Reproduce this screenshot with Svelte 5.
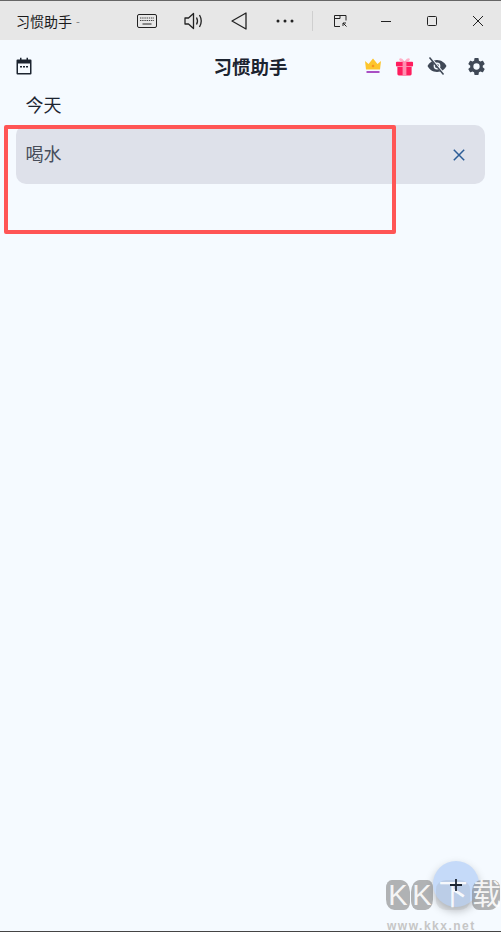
<script lang="ts">
  let habits = $state(["喝水"]);
</script>

<div class="window">
  <header class="titlebar">
    <span class="app-name">习惯助手</span>
    <span class="dash">-</span>
    <div class="tools">
      <svg class="tool kb" viewBox="0 0 20 14" width="20" height="14" fill="none" stroke="#222" stroke-width="1">
        <rect x="0.5" y="0.5" width="19" height="13" rx="1.5" />
        <path d="M3 4h14M3 6.5h14" stroke-dasharray="1.4 0.8" stroke="#444" />
        <path d="M5.5 10h9" />
      </svg>
      <svg class="tool vol" viewBox="0 0 20 18" width="20" height="18" fill="none" stroke="#222" stroke-width="1.3">
        <path d="M1 6h3.500L9.500 1.500v15L4.500 12H1z" stroke-linejoin="round" />
        <path d="M12.500 5.500q2 3.500 0 7M15.500 3q3.500 6 0 12" />
      </svg>
      <svg class="tool back" viewBox="0 0 16 18" width="16" height="18" fill="none" stroke="#222" stroke-width="1.3">
        <path d="M15 1v16L1 9z" stroke-linejoin="round" />
      </svg>
      <svg class="tool more" viewBox="0 0 18 4" width="18" height="4" fill="#222">
        <circle cx="2" cy="2" r="1.500" /><circle cx="9" cy="2" r="1.500" /><circle cx="16" cy="2" r="1.500" />
      </svg>
      <i class="sep"></i>
      <svg class="tool pop" viewBox="0 0 13 12" width="13" height="12" fill="none" stroke="#222" stroke-width="1">
        <path d="M6 11.500H.5V.5h11.500v5M.5 3.500h5.500V.5M12.500 11.500l-3.500-3.500M9 11V8h3" />
      </svg>
    </div>
    <div class="win-btns">
      <svg viewBox="0 0 10 10" width="10" height="10" stroke="#222" fill="none"><path d="M0 5.500h10" /></svg>
      <svg viewBox="0 0 10 10" width="10" height="10" stroke="#222" fill="none"><rect x="0.500" y="0.500" width="9" height="9" rx="1" /></svg>
      <svg viewBox="0 0 10 10" width="10" height="10" stroke="#222" fill="none"><path d="M0 0l10 10M10 0L0 10" /></svg>
    </div>
  </header>

  <main class="app">
    <div class="appbar">
      <svg class="cal" viewBox="0 0 16 18" width="16" height="18">
        <path d="M1.500 2.500h2.500V.8h1.500v1.700h5V.8h1.500v1.700h2.500a1 1 0 0 1 1 1v13a1 1 0 0 1-1 1h-13a1 1 0 0 1-1-1v-13a1 1 0 0 1 1-1z" fill="#1c2430" />
        <rect x="2" y="6.500" width="12" height="9.500" fill="#f5faff" />
        <path d="M4 9h2v1.500H4zM7 9h2v1.500H7zM10 9h2v1.500h-2z" fill="#1c2430" />
      </svg>
      <h1>习惯助手</h1>
      <div class="actions">
        <svg viewBox="0 0 18 16" width="18" height="16">
          <path d="M1 3l3.500 3L9 0.500 13.500 6 17 3l-1 8.500H2z" fill="#fdc52c" />
          <circle cx="9" cy="8" r="1.300" fill="#f7931e" />
          <rect x="2.500" y="13" width="13" height="2" fill="#a94fc4" />
        </svg>
        <svg viewBox="0 0 20 20" width="19" height="19">
          <path d="M10 5C8 1 5 0.500 4.500 2S6 5 10 5c4 0 6-1.500 5.500-3S12 1 10 5z" fill="#ffb0c8" />
          <rect x="1" y="5" width="18" height="5" rx="1" fill="#ff1d5e" />
          <path d="M2.500 10.500h15V18a1.500 1.500 0 0 1-1.500 1.500H4A1.500 1.500 0 0 1 2.500 18z" fill="#ff1d5e" />
          <rect x="8" y="5" width="4" height="14.500" fill="#ff8fb0" />
        </svg>
        <svg viewBox="0 0 20 18" width="20" height="18">
          <path d="M10 3C5.500 3 2 6 .5 9 2 12 5.500 15 10 15s8-3 9.500-6C18 6 14.500 3 10 3z" fill="#3f4856" />
          <circle cx="10" cy="9" r="3.400" fill="#f5faff" />
          <circle cx="10" cy="9" r="2" fill="#3f4856" />
          <path d="M3.300 0.500l14 17" stroke="#f5faff" stroke-width="2.200" />
          <path d="M2.500 0.500l14 17" stroke="#3f4856" stroke-width="1.500" />
        </svg>
        <svg class="gear" viewBox="0 0 24 24" width="21" height="21">
          <path fill="#3f4856" d="M19.140 12.940c.04-.3.060-.61.060-.94s-.02-.64-.07-.94l2.030-1.580a.49.49 0 0 0 .12-.61l-1.920-3.320a.49.49 0 0 0-.59-.22l-2.390.96a7.030 7.030 0 0 0-1.620-.94l-.36-2.540a.48.48 0 0 0-.48-.41h-3.840a.48.48 0 0 0-.47.41l-.36 2.540c-.59.24-1.130.57-1.620.94l-2.390-.96a.49.49 0 0 0-.59.22L2.740 8.870a.48.48 0 0 0 .12.61l2.030 1.580c-.05.3-.09.63-.09.94s.02.64.07.94l-2.030 1.580a.49.49 0 0 0-.12.61l1.920 3.320c.12.22.37.29.59.22l2.390-.96c.5.380 1.030.7 1.620.94l.36 2.540c.05.24.24.41.48.41h3.840c.24 0 .44-.17.47-.41l.36-2.540c.59-.24 1.130-.56 1.620-.94l2.390.96c.22.08.47 0 .59-.22l1.920-3.320a.48.48 0 0 0-.12-.61l-2.010-1.580zM12 15.600a3.600 3.600 0 1 1 0-7.200 3.600 3.600 0 0 1 0 7.200z" />
        </svg>
      </div>
    </div>

    <h2 class="section">今天</h2>

    {#each habits as habit}
      <div class="habit">
        <span>{habit}</span>
        <svg viewBox="0 0 12 12" width="12" height="12" stroke="#2b5c96" stroke-width="1.500" fill="none"><path d="M.8.800l10.400 10.400M11.200.800L.8 11.200" /></svg>
      </div>
    {/each}
  </main>

  <!-- annotation + watermark lie over the page -->
  <div class="highlight"></div>
  <div class="fab"></div>
  <div class="watermark">
    <div class="mark">
      <span class="k1">K</span><span class="k2">K</span><span class="xia">下</span><span class="zai">载</span>
    </div>
    <div class="url">www.kkx.net</div>
  </div>
  <svg class="plus" viewBox="0 0 12 12" width="12" height="12" stroke="#1d2633" stroke-width="1.800"><path d="M6 0v12M0 6h12" /></svg>
</div>

<style>
  :global(body) {
    margin: 0;
    background: #f5faff;
  }

  .window {
    position: relative;
    width: 501px;
    height: 932px;
    box-sizing: border-box;
    display: flex;
    flex-direction: column;
    overflow: hidden;
    border-top: 1px solid #666;
    border-bottom: 1px solid #444;
    font-family: "Noto Sans CJK SC", "Noto Sans", sans-serif;
    background: #f5faff;
  }

  .titlebar {
    height: 39px;
    flex: none;
    display: flex;
    align-items: center;
    background: #e7e7e7;
    padding-left: 16px;
    color: #1a1a1a;
  }

  .app-name {
    font-size: 14px;
    width: 60px;
    white-space: nowrap;
  }

  .dash {
    font-size: 11px;
    color: #777;
  }

  .tools {
    display: flex;
    align-items: center;
    margin-left: 57px;
  }

  .vol { margin-left: 27px; }
  .back { margin-left: 27px; }
  .more { margin-left: 29px; }
  .pop { margin-left: 21px; }

  .sep {
    width: 1px;
    height: 20px;
    background: #cfcfcf;
    margin-left: 18px;
  }

  .win-btns {
    margin-left: auto;
    margin-right: 18px;
    display: flex;
    gap: 36px;
  }

  .app {
    flex: 1;
    display: flex;
    flex-direction: column;
    padding: 0 16px;
  }

  .appbar {
    position: relative;
    height: 52px;
    display: flex;
    align-items: center;
    justify-content: center;
  }

  .cal {
    position: absolute;
    left: 0;
    top: 17px;
  }

  h1 {
    margin: 0;
    font-size: 18.500px;
    font-weight: 700;
    color: #1c2430;
    line-height: 1;
  }

  .actions {
    position: absolute;
    right: -2px;
    top: 0;
    height: 52px;
    display: flex;
    align-items: center;
    gap: 13px;
  }

  .gear { margin-left: 6px; }

  .section {
    margin: 0 0 0 9.500px;
    height: 33px;
    font-size: 18px;
    font-weight: 400;
    line-height: 24px;
    color: #1c2430;
  }

  .habit {
    height: 59px;
    box-sizing: border-box;
    padding: 0 20px 0 9.500px;
    display: flex;
    align-items: center;
    justify-content: space-between;
    background: #dee1ea;
    border-radius: 10px;
    font-size: 18px;
    color: #474d5a;
  }

  .habit span {
    margin-bottom: 4px;
  }

  .highlight {
    position: absolute;
    left: 4px;
    top: 124px;
    width: 392px;
    height: 109px;
    box-sizing: border-box;
    border: 4px solid #ff5555;
    border-radius: 2px;
  }

  .fab {
    position: absolute;
    left: 433px;
    top: 860px;
    width: 46px;
    height: 46px;
    border-radius: 50%;
    background: #c5daf9;
    box-shadow: 0 4px 8px rgba(0, 0, 0, 0.25);
  }

  .plus {
    position: absolute;
    left: 450px;
    top: 878px;
  }

  .watermark {
    position: absolute;
    left: 386px;
    top: 879px;
    width: 114px;
    font-family: "Liberation Sans", "Noto Sans CJK SC", sans-serif;
  }

  .mark {
    display: flex;
    height: 30px;
    align-items: center;
  }

  .mark span {
    height: 30px;
    text-align: center;
    background: rgba(130, 130, 130, 0.6);
    color: rgba(255, 255, 255, 0.9);
    font-size: 29px;
    line-height: 30px;
  }

  .k1 { width: 24px; border-radius: 25% 40% 25% 35%; }
  .k2 { width: 22px; margin-left: 1px; border-radius: 40% 25% 35% 30%; }
  .mark .xia {
    width: 34px;
    margin-left: 3px;
    background: rgba(130, 130, 130, 0.14);
    border-radius: 30%;
  }
  .zai { width: 28px; margin-left: 2px; border-radius: 35% 25% 40% 25%; }

  .url {
    font-size: 12px;
    font-weight: 700;
    letter-spacing: 1.500px;
    color: #c6c6c6;
    line-height: 14px;
    margin-top: 9px;
    margin-left: 1px;
    white-space: nowrap;
  }
</style>
